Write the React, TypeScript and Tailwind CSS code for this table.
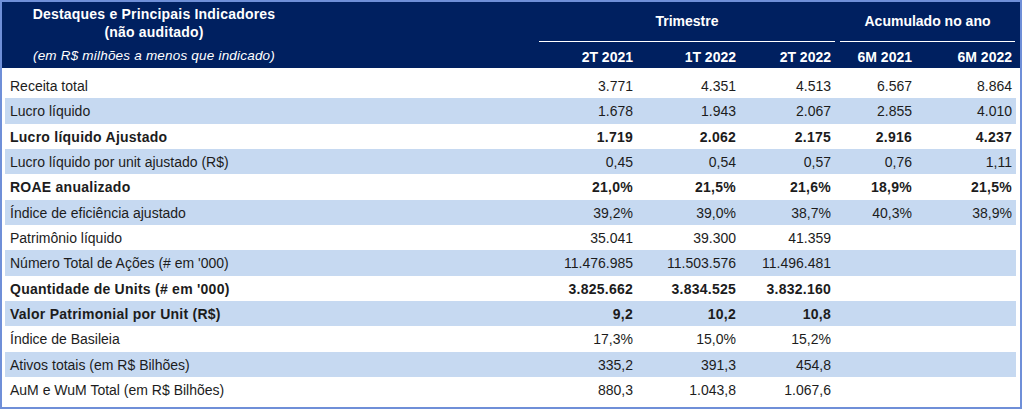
import React from 'react'

type Row = {
  label: string
  values: string[]
  bold?: boolean
}

const ROWS: Row[] = [
  { label: 'Receita total', values: ['3.771', '4.351', '4.513', '6.567', '8.864'] },
  { label: 'Lucro líquido', values: ['1.678', '1.943', '2.067', '2.855', '4.010'] },
  { label: 'Lucro líquido Ajustado', values: ['1.719', '2.062', '2.175', '2.916', '4.237'], bold: true },
  { label: 'Lucro líquido por unit ajustado (R$)', values: ['0,45', '0,54', '0,57', '0,76', '1,11'] },
  { label: 'ROAE anualizado', values: ['21,0%', '21,5%', '21,6%', '18,9%', '21,5%'], bold: true },
  { label: 'Índice de eficiência ajustado', values: ['39,2%', '39,0%', '38,7%', '40,3%', '38,9%'] },
  { label: 'Patrimônio líquido', values: ['35.041', '39.300', '41.359', '', ''] },
  { label: 'Número Total de Ações (# em \'000)', values: ['11.476.985', '11.503.576', '11.496.481', '', ''] },
  { label: 'Quantidade de Units (# em \'000)', values: ['3.825.662', '3.834.525', '3.832.160', '', ''], bold: true },
  { label: 'Valor Patrimonial por Unit (R$)', values: ['9,2', '10,2', '10,8', '', ''], bold: true },
  { label: 'Índice de Basileia', values: ['17,3%', '15,0%', '15,2%', '', ''] },
  { label: 'Ativos totais (em R$ Bilhões)', values: ['335,2', '391,3', '454,8', '', ''] },
  { label: 'AuM e WuM Total (em R$ Bilhões)', values: ['880,3', '1.043,8', '1.067,6', '', ''] },
]

const PERIODS = ['2T 2021', '1T 2022', '2T 2022', '6M 2021', '6M 2022']

const GRID = 'grid grid-cols-[532px_100px_103px_95px_81px_100px]'

const App = () => (
  <div className="bg-white w-[1024px] h-[411px]" style={{ fontFamily: '"Liberation Sans", Arial, sans-serif' }}>
    <div className="w-[1022px] border-2 border-[#6f8fd8] bg-white">
      {/* Header */}
      <div className="bg-[#002060] text-white text-[14px] font-bold">
        <div className={`${GRID} ml-[3px] mr-[4px]`}>
          <div className="row-span-2">
            <div className="w-[298px] text-center pt-[3px] leading-[18px] tracking-[0.2px]">
              <div>Destaques e Principais Indicadores</div>
              <div>(não auditado)</div>
              <div className="mt-[6px] font-normal italic text-[13.5px]">(em R$ milhões a menos que indicado)</div>
            </div>
          </div>
          <div className="col-span-3 h-[40px] flex items-center justify-center ml-[2px] border-b border-white">
            Trimestre
          </div>
          <div className="col-span-2 h-[40px] flex items-center justify-center ml-[5px] mr-[1px] border-b border-white">
            Acumulado no ano
          </div>
          {PERIODS.map((p) => (
            <div key={p} className="h-[26px] flex items-center justify-end pr-[4px] pt-[4px]">
              {p}
            </div>
          ))}
        </div>
      </div>

      {/* Body */}
      <div className="ml-[3px] mr-[4px] pt-[5px] pb-[5px] text-[14px] text-[#1c1c1c]">
        {ROWS.map((row, i) => (
          <div
            key={row.label}
            className={`${GRID} h-[25.33px] items-center pt-[2px] ${i % 2 === 1 ? 'bg-[#c6d9f1]' : 'bg-white'} ${row.bold ? 'font-bold tracking-[0.25px]' : ''}`}
          >
            <div className="pl-[5px]">{row.label}</div>
            {row.values.map((v, j) => (
              <div key={j} className="text-right pr-[4px]">
                {v}
              </div>
            ))}
          </div>
        ))}
      </div>
    </div>
  </div>
)

export default App
